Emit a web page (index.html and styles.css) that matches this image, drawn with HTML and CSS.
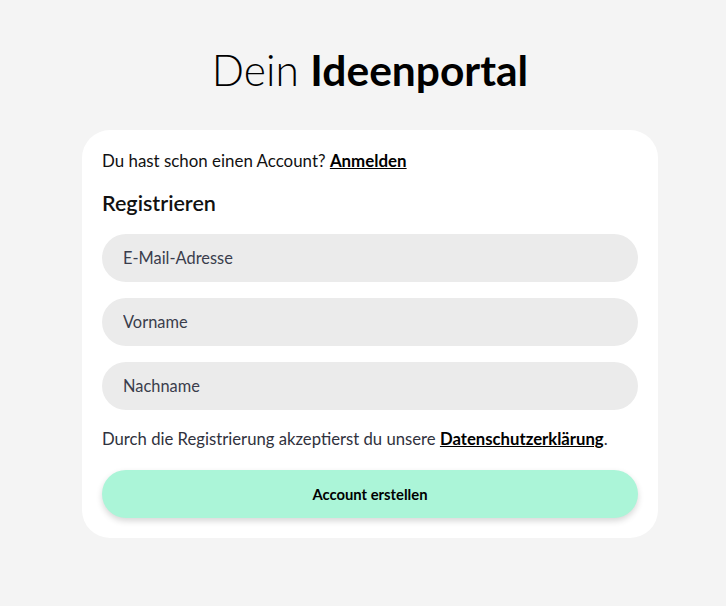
FILE: index.html
```html
<!DOCTYPE html>
<html lang="de">
<head>
    <meta charset="UTF-8">
    <meta name="viewport" content="width=device-width, initial-scale=1.0">
    <title>Dein Ideenportal</title>
    <link rel="stylesheet" href="styles.css">
</head>
<body>
    <header>
        <h1>Dein <strong>Ideenportal</strong></h1>
    </header>
    <main>
        <section class="card">
            <p class="login-hint">Du hast schon einen Account? <a href="#">Anmelden</a></p>
            <h2>Registrieren</h2>
            <form class="register-form">
                <input type="email" name="email" placeholder="E-Mail-Adresse">
                <input type="text" name="firstname" placeholder="Vorname">
                <input type="text" name="lastname" placeholder="Nachname">
                <p class="privacy">Durch die Registrierung akzeptierst du unsere <a href="#">Datenschutzerklärung</a>.</p>
                <button type="submit">Account erstellen</button>
            </form>
        </section>
    </main>
</body>
</html>
```

FILE: styles.css
```css
body {
    font-family: Lato, "Open Sans", sans-serif;
    margin: 0;
    padding: 0 0 0 14px;
    background-color: #f4f4f4;
    color: #111;
}

header {
    padding-top: 45px;
    text-align: center;
}

h1 {
    margin: 0;
    font-size: 42.5px;
    font-weight: 300;
    line-height: 50px;
    color: #000;
}

h1 strong {
    font-weight: 700;
}

main {
    display: flex;
    justify-content: center;
    padding-top: 35px;
}

.card {
    width: 536px;
    padding: 20px;
    background-color: #fff;
    border-radius: 28px;
}

.login-hint {
    margin: 0;
    font-size: 16.9px;
    line-height: 22px;
}

a {
    color: #000;
    font-weight: 700;
}

h2 {
    margin: 18px 0 0;
    font-size: 21.5px;
    font-weight: 600;
    line-height: 26px;
}

.register-form {
    margin-top: 18px;
    display: flex;
    flex-direction: column;
    gap: 16px;
}

.register-form input {
    box-sizing: border-box;
    height: 48px;
    padding: 0 21px 2px;
    border: none;
    border-radius: 24px;
    background-color: #ebebeb;
    font-family: inherit;
    font-size: 16.4px;
    color: #333;
    outline: none;
}

.register-form input::placeholder {
    color: #3a3d4c;
}

.privacy {
    margin: 2px 0 4px;
    font-size: 16.7px;
    line-height: 22px;
    color: #30323d;
}

.register-form button {
    height: 48px;
    border: none;
    border-radius: 24px;
    background-color: #abf5d8;
    font-family: inherit;
    font-size: 14.8px;
    font-weight: 700;
    color: #000;
    box-shadow: 0 3px 6px rgba(0, 0, 0, 0.16);
    cursor: pointer;
}
```
